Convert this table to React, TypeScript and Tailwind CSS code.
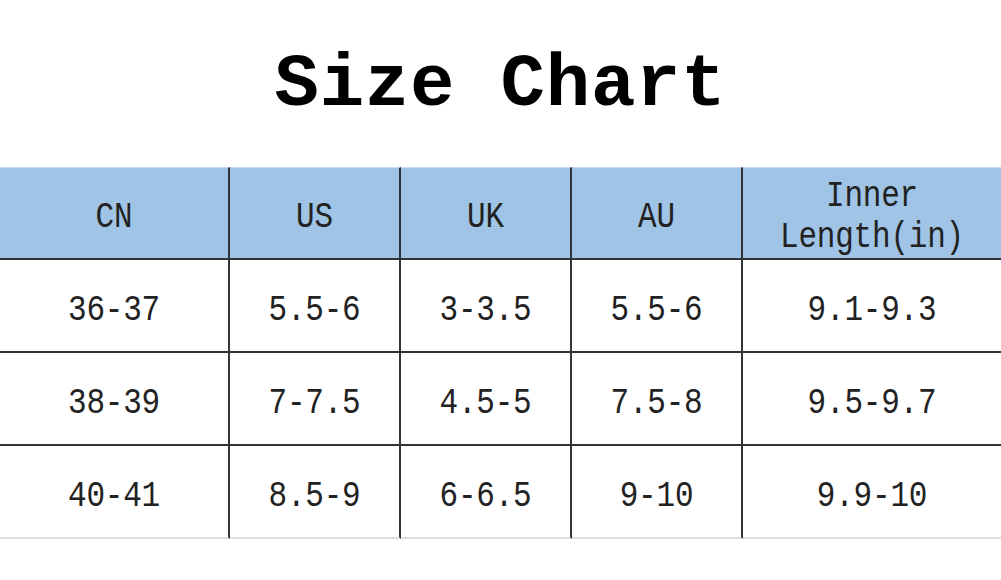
import React from "react";

const header = ["CN", "US", "UK", "AU", "Inner\nLength(in)"];
const rows = [
  ["36-37", "5.5-6", "3-3.5", "5.5-6", "9.1-9.3"],
  ["38-39", "7-7.5", "4.5-5", "7.5-8", "9.5-9.7"],
  ["40-41", "8.5-9", "6-6.5", "9-10", "9.9-10"],
];

export default function App() {
  return (
    <div className="w-[1001px] h-[580px] bg-white overflow-hidden" style={{ fontFamily: '"Liberation Mono", "Courier New", monospace' }}>
      <div className="h-[167px] flex items-center justify-center pt-[2px]">
        <h1 className="text-[74px] font-bold text-black leading-none tracking-[0.8px]">Size Chart</h1>
      </div>
      <div className="grid grid-cols-[230px_171px_171px_171px_1fr] text-[#222] text-[31px] tracking-[-0.2px]">
        {header.map((h, i) => (
          <div
            key={h}
            className={`h-[93px] bg-[#9fc4e6] border-t border-t-[#c9dcef] border-b-2 border-b-[#333] flex items-center justify-center text-center ${i < 4 ? "border-r-2 border-r-[#333]" : ""}`}
          >
            <span className="inline-block whitespace-pre-line leading-[34px] scale-y-[1.2] translate-y-[4px]">{h}</span>
          </div>
        ))}
        {rows.map((r, ri) =>
          r.map((c, ci) => (
            <div
              key={ri + "-" + ci}
              className={`h-[93px] bg-white flex items-center justify-center ${ri < 2 ? "border-b-2 border-b-[#333]" : "border-b-2 border-b-[#ddd]"} ${ci < 4 ? "border-r-2 border-r-[#333]" : ""}`}
            >
              <span className="inline-block scale-y-[1.2] translate-y-[5px]">{c}</span>
            </div>
          ))
        )}
      </div>
    </div>
  );
}
